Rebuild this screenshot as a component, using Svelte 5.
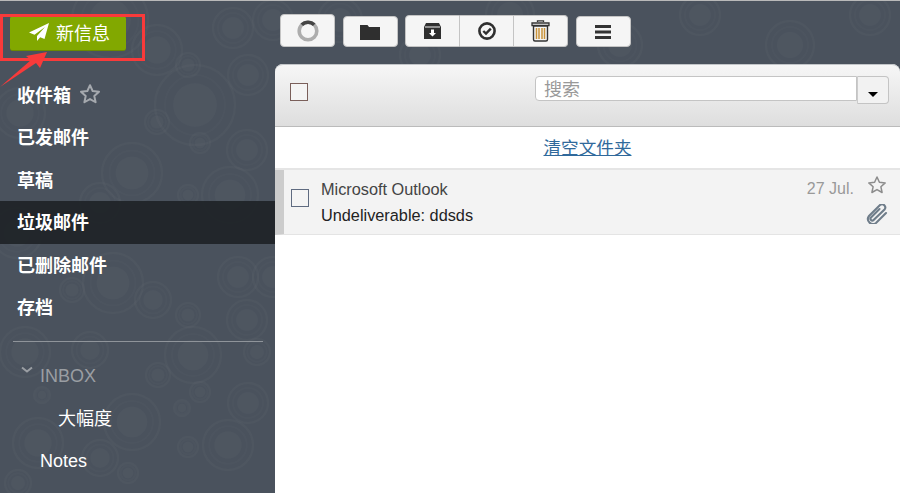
<script>
    const circles = [
        [195,105,40],[233,28,20],[248,75,20],[157,50,25],[188,65,12],[157,122,12],[20,113,25],[110,20,38],
        [200,143,10],[247,150,20],[273,20,20],[132,173,30],[230,195,28],[188,195,10],[100,203,20],[113,283,30],
        [153,300,18],[72,290,12],[238,277,20],[273,277,20],[247,320,20],[188,315,12],[17,233,25],[193,355,28],
        [25,352,25],[90,350,18],[257,352,13],[248,403,20],[200,392,10],[182,408,8],[158,375,12],[42,395,8],
        [132,422,28],[38,443,25],[100,458,18],[128,473,10],[228,445,25],[188,447,10],[18,483,13],
        [340,20,22],[420,55,20],[510,15,24],[620,45,22],[700,15,20],[790,45,24],[870,15,20]
    ];
    const folders = ['收件箱', '已发邮件', '草稿', '垃圾邮件', '已删除邮件', '存档'];
</script>

<div class="page">
    <svg class="pattern" width="900" height="493" aria-hidden="true">
        {#each circles as [x, y, r]}
            <g fill="none" stroke="#fff">
                <circle cx={x} cy={y} r={r * 0.55} fill="#fff" fill-opacity="0.025" stroke="none" />
                <circle cx={x} cy={y} r={r * 0.75} stroke-opacity="0.014" stroke-width="2" />
                <circle cx={x} cy={y} r={r} stroke-opacity="0.022" stroke-width="2.500" />
            </g>
        {/each}
    </svg>

    <aside class="sidebar">
        <button class="compose">
            <svg width="20" height="18" viewBox="0 0 20 18"><path d="M20 0 0 9.500l5.500 2.300L16 4 8 13v5l3.200-3.800 4.300 1.800z" fill="#fff" /></svg>
            <span>新信息</span>
        </button>
        <nav class="folders">
            {#each folders as name, i}
                <div class="folder" class:active={i === 3}>
                    {name}
                    {#if i === 0}
                        <svg class="fav" width="22" height="22" viewBox="0 0 20 20"><path d="m10 2 2.400 5.300 5.800.6-4.300 3.900 1.200 5.700L10 14.600l-5.100 2.900 1.200-5.700L1.800 7.900l5.800-.6z" fill="none" stroke="#a5a9ae" stroke-width="1.800" stroke-linejoin="round" /></svg>
                    {/if}
                </div>
            {/each}
        </nav>
        <hr />
        <div class="tree inbox">
            <svg class="chevron" width="12" height="8" viewBox="0 0 12 8"><path d="m1 1.500 5 4 5-4" fill="none" stroke="#9a9ea3" stroke-width="2" /></svg>
            INBOX
        </div>
        <div class="tree sub">大幅度</div>
        <div class="tree notes">Notes</div>
    </aside>

    <main class="content">
        <div class="toolbar">
            <button class="tool first">
                <svg width="22" height="22" viewBox="0 0 22 22"><circle cx="11" cy="11" r="8.800" fill="none" stroke="#adadad" stroke-width="3.600" /><path d="M4.800 4.800A8.800 8.800 0 0 1 17.200 4.800" fill="none" stroke="#444" stroke-width="3.600" /></svg>
            </button>
            <button class="tool">
                <svg width="20" height="16" viewBox="0 0 20 16"><path d="M0 1h7.500l1.500 2h11v13H0z" fill="#2f2f2f" /></svg>
            </button>
            <div class="group">
                <button class="tool">
                    <svg width="17" height="16" viewBox="0 0 17 16"><path d="M2 0h13l2 4v12H0V4z" fill="#2f2f2f" /><path d="M1 4h15" stroke="#f4f4f4" /><path d="M7 6.500h3V10h2l-3.500 3.500L5 10h2z" fill="#fff" /></svg>
                </button>
                <button class="tool">
                    <svg width="18" height="18" viewBox="0 0 18 18"><circle cx="9" cy="9" r="7.600" fill="none" stroke="#2f2f2f" stroke-width="2.600" /><path d="m5.300 9 2.700 2.600 4.800-5" fill="none" stroke="#2f2f2f" stroke-width="2.400" /></svg>
                </button>
                <button class="tool">
                    <svg width="19" height="22" viewBox="0 0 19 22"><path d="M6.500 2V.8h6V2M1 3h17v2.500H1z" fill="#f4f4f4" stroke="#333" stroke-width="1.300" /><path d="M2.500 6v13.500a1.500 1.500 0 0 0 1.500 1.500h11a1.500 1.500 0 0 0 1.500-1.500V6z" fill="#f4f4f4" stroke="#333" stroke-width="1.400" /><path d="M5.500 8v11M8 8v11M11 8v11M13.500 8v11" stroke="#c9933a" stroke-width="1.500" /></svg>
                </button>
            </div>
            <button class="tool">
                <svg width="16" height="14" viewBox="0 0 16 14"><path d="M0 0h16v3H0zM0 5.500h16v3H0zM0 11h16v3H0z" fill="#333" /></svg>
            </button>
        </div>

        <section class="panel">
            <header class="panel-head">
                <span class="check"></span>
                <div class="search">
                    <div class="search-input">搜索</div>
                    <div class="search-menu"><i></i></div>
                </div>
            </header>
            <div class="clear"><a href="#clear">清空文件夹</a></div>
            <article class="mail">
                <span class="check"></span>
                <div class="mail-text">
                    <div class="sender">Microsoft Outlook</div>
                    <div class="subject">Undeliverable: ddsds</div>
                </div>
                <div class="date">27 Jul.</div>
                <div class="mail-icons">
                    <svg width="20" height="20" viewBox="0 0 20 20"><path d="m10 2 2.400 5.300 5.800.6-4.300 3.900 1.200 5.700L10 14.600l-5.100 2.900 1.200-5.700L1.800 7.900l5.800-.6z" fill="none" stroke="#8c8c8c" stroke-width="1.500" stroke-linejoin="round" /></svg>
                    <svg width="22" height="20" viewBox="0 0 22 20"><path d="M13.500 5 5 13.500a1.800 1.800 0 0 0 2.600 2.600L18.500 5.500a3.200 3.200 0 0 0-4.500-4.500L3 12a5 5 0 0 0 7 7L20 9" fill="none" stroke="#6f7d8a" stroke-width="2.100" stroke-linecap="round" /></svg>
                </div>
            </article>
        </section>
    </main>

    <svg class="callout" width="150" height="92" aria-hidden="true">
        <rect x="1.500" y="15.500" width="142" height="44" fill="none" stroke="#f93a3a" stroke-width="3" />
        <path d="M0 87 31 60 26 56 47 52 40 68 36 63z" fill="#f93a3a" />
    </svg>
</div>

<style>
    :global(body) {
        margin: 0;
        overflow: hidden;
    }
    .page {
        position: relative;
        display: flex;
        width: 900px;
        height: 493px;
        overflow: hidden;
        background: #4a525d;
        box-sizing: border-box;
        border-top: 1px solid #b9b9b9;
        font-family: "Liberation Sans", "Noto Sans CJK SC", sans-serif;
    }
    .pattern {
        position: absolute;
        left: 0;
        top: -1px;
    }
    .callout {
        position: absolute;
        left: 0;
        top: -1px;
    }
    .sidebar {
        position: relative;
        flex: 0 0 275px;
        color: #fff;
    }
    .compose {
        display: flex;
        align-items: center;
        gap: 7px;
        width: 116px;
        height: 35px;
        margin: 15px 0 0 10px;
        padding: 0 0 3px 19px;
        border: 0;
        border-radius: 3px;
        border-bottom: 1px solid #6a8a00;
        background: #82a800;
        color: #fff;
        font: 400 18px "Liberation Sans", "Noto Sans CJK SC", sans-serif;
    }
    .folders {
        margin-top: 22.500px;
    }
    .folder {
        display: flex;
        align-items: center;
        gap: 8px;
        height: 42.500px;
        padding: 0 0 2px 17px;
        box-sizing: border-box;
        font-size: 18px;
        font-weight: 700;
    }
    .folder.active {
        background: rgba(27, 30, 34, 0.85);
    }
    .fav {
        margin-top: 1px;
    }
    hr {
        margin: 12px 12px 0 13px;
        border: 0;
        border-top: 1px solid #8f949a;
    }
    .tree {
        display: flex;
        align-items: center;
        height: 42.500px;
        padding-left: 40px;
        font-size: 18px;
    }
    .inbox {
        position: relative;
        margin-top: 14px;
        color: #9a9ea3;
    }
    .chevron {
        position: absolute;
        left: 21px;
        top: 10px;
    }
    .sub {
        padding-left: 58px;
        padding-bottom: 5px;
        box-sizing: border-box;
    }
    .notes {
        padding-bottom: 1px;
        box-sizing: border-box;
    }
    .content {
        position: relative;
        flex: 1;
        display: flex;
        flex-direction: column;
        min-width: 0;
    }
    .toolbar {
        display: flex;
        align-items: flex-end;
        gap: 7.500px;
        height: 46px;
        padding-left: 5px;
    }
    .tool {
        display: flex;
        align-items: center;
        justify-content: center;
        width: 55px;
        height: 31px;
        padding: 0;
        border: 1px solid #c4c4c4;
        border-radius: 4px;
        background: #f5f5f5;
    }
    .tool.first {
        height: 33px;
    }
    .group {
        display: flex;
        height: 32px;
    }
    .group .tool {
        width: 54px;
        height: 32px;
        border-radius: 0;
        border-left: 0;
    }
    .group .tool:first-child {
        width: 55px;
        border-left: 1px solid #c4c4c4;
        border-radius: 4px 0 0 4px;
    }
    .group .tool:last-child {
        border-radius: 0 4px 4px 0;
    }
    .panel {
        flex: 1;
        margin-top: 17px;
        background: #fff;
        border-radius: 8px 8px 0 0;
    }
    .panel-head {
        position: relative;
        display: flex;
        height: 63px;
        box-sizing: border-box;
        border-top: 1px solid #c2c5c8;
        border-bottom: 1px solid #bbb;
        border-radius: 8px 8px 0 0;
        background: linear-gradient(#f6f6f6, #dedede);
    }
    .check {
        flex: none;
        box-sizing: border-box;
        width: 18px;
        height: 18px;
        border: 1px solid #7a5f5a;
        background: #f4f4f4;
    }
    .panel-head .check {
        margin: 18px 0 0 15px;
    }
    .search {
        display: flex;
        align-items: flex-start;
        margin: 11px 0 0 227px;
    }
    .search-input {
        box-sizing: border-box;
        width: 322px;
        height: 25px;
        padding-left: 8px;
        border: 1px solid #c4c4c4;
        border-radius: 4px 0 0 4px;
        background: #fff;
        color: #999;
        font-size: 18px;
        line-height: 26px;
        overflow: hidden;
    }
    .search-menu {
        display: flex;
        align-items: center;
        justify-content: center;
        box-sizing: border-box;
        width: 32px;
        height: 28px;
        border: 1px solid #c4c4c4;
        border-left: 1px solid #ccc;
        border-radius: 0 4px 4px 0;
        background: #f2f2f2;
    }
    .search-menu i {
        margin-top: 8px;
        border: 5px solid transparent;
        border-top-color: #000;
        border-bottom: 0;
    }
    .clear {
        height: 41px;
        line-height: 43px;
        text-align: center;
        border-bottom: 2px solid #e5e5e5;
        font-size: 17.600px;
    }
    .clear a {
        color: #30699b;
    }
    .mail {
        display: flex;
        height: 65px;
        box-sizing: border-box;
        border-left: 9px solid #ccc;
        border-bottom: 1px solid #e4e4e4;
        background: #f3f3f3;
    }
    .mail .check {
        margin: 19px 0 0 7px;
        border-color: #5f6b80;
    }
    .mail-text {
        flex: 1;
        margin-left: 12px;
        padding-top: 9px;
        font-size: 16.300px;
    }
    .sender {
        height: 26px;
        line-height: 20px;
        color: #444;
    }
    .subject {
        line-height: 20px;
        color: #222;
    }
    .date {
        padding-top: 9px;
        line-height: 20px;
        font-size: 16px;
        color: #999;
    }
    .mail-icons {
        display: flex;
        flex-direction: column;
        align-items: center;
        gap: 9px;
        width: 46px;
        padding-top: 5px;
    }
</style>
